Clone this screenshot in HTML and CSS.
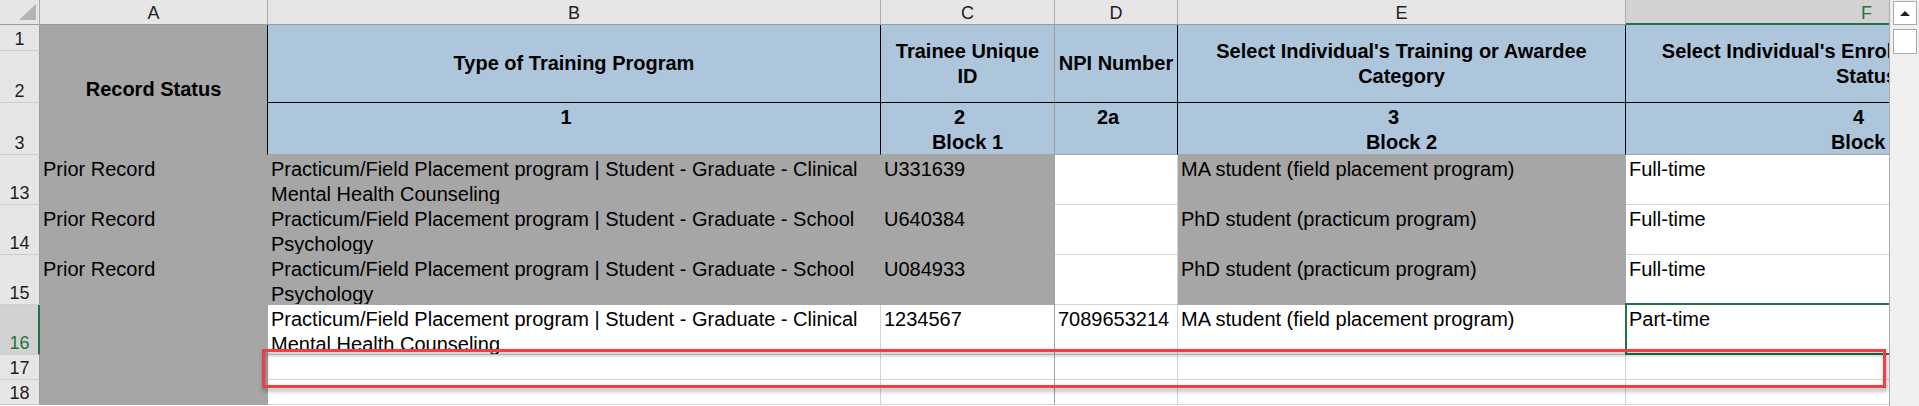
FILE: index.html
```html
<!DOCTYPE html>
<html>
<head>
<meta charset="utf-8">
<link rel="stylesheet" href="styles.css">
</head>
<body>
<div class="window">
  <div class="sheet">
    <div class="grid">
      <div class="corner"><svg width="39" height="24" viewBox="0 0 39 24"><polygon points="19,20 36,20 36,4" fill="#b4b4b4"/></svg></div>
      <div class="hd">A</div>
      <div class="hd">B</div>
      <div class="hd">C</div>
      <div class="hd">D</div>
      <div class="hd">E</div>
      <div class="hd sel">F</div>

      <div class="rh">1</div>
      <div class="ah">Record Status</div>
      <div class="th">Type of Training Program</div>
      <div class="th cd">Trainee Unique<br>ID</div>
      <div class="th">NPI Number</div>
      <div class="th">Select Individual's Training or Awardee Category</div>
      <div class="th">Select Individual's Enrollment/Employment<br>Status</div>

      <div class="rh">2</div>

      <div class="rh">3</div>
      <div class="ts"><span class="n">1</span></div>
      <div class="ts cd"><span class="n">2</span><br>Block 1</div>
      <div class="ts"><span class="n">2a</span></div>
      <div class="ts"><span class="n">3</span><br>Block 2</div>
      <div class="ts"><span class="n">4</span><br>Block 3</div>

      <div class="rh">13</div>
      <div class="c g">Prior Record</div>
      <div class="c g">Practicum/Field Placement program | Student - Graduate - Clinical Mental Health Counseling</div>
      <div class="c g cd">U331639</div>
      <div class="c w"></div>
      <div class="c g">MA student (field placement program)</div>
      <div class="c w">Full-time</div>

      <div class="rh">14</div>
      <div class="c g">Prior Record</div>
      <div class="c g">Practicum/Field Placement program | Student - Graduate - School Psychology</div>
      <div class="c g cd">U640384</div>
      <div class="c w"></div>
      <div class="c g">PhD student (practicum program)</div>
      <div class="c w">Full-time</div>

      <div class="rh">15</div>
      <div class="c g">Prior Record</div>
      <div class="c g">Practicum/Field Placement program | Student - Graduate - School Psychology</div>
      <div class="c g cd">U084933</div>
      <div class="c w"></div>
      <div class="c g">PhD student (practicum program)</div>
      <div class="c w">Full-time</div>

      <div class="rh sel">16</div>
      <div class="c g"></div>
      <div class="c w">Practicum/Field Placement program | Student - Graduate - Clinical Mental Health Counseling</div>
      <div class="c w cd">1234567</div>
      <div class="c w">7089653214</div>
      <div class="c w">MA student (field placement program)</div>
      <div class="c w cur">Part-time<div class="selbox"></div></div>

      <div class="rh">17</div>
      <div class="c g"></div>
      <div class="c w"></div>
      <div class="c w cd"></div>
      <div class="c w"></div>
      <div class="c w"></div>
      <div class="c w"></div>

      <div class="rh">18</div>
      <div class="c g"></div>
      <div class="c w"></div>
      <div class="c w cd"></div>
      <div class="c w"></div>
      <div class="c w"></div>
      <div class="c w"></div>
    </div>
    <div class="annot"></div>
  </div>
  <div class="vscroll">
    <div class="sb-btn"><span class="arrow"></span></div>
    <div class="sb-thumb"></div>
  </div>
</div>
</body>
</html>
```

FILE: styles.css
```css
html, body {
  margin: 0;
  padding: 0;
}
body {
  width: 1919px;
  height: 406px;
  overflow: hidden;
  background: #ffffff;
  font-family: "Liberation Sans", Arial, sans-serif;
  color: #000;
}
.window {
  display: flex;
  height: 406px;
}
.sheet {
  position: relative;
  flex: none;
  width: 1890px;
  height: 406px;
  box-sizing: border-box;
  border-right: 1px solid #ababab;
  overflow: hidden;
}
.grid {
  display: grid;
  width: 2108px;
  grid-template-columns: 40px 228px 613px 174px 123px 448px 482px;
  grid-template-rows: 25px 26px 52px 52px 50px 50px 50px 50px 25px 25px;
}
.grid > div {
  box-sizing: border-box;
  overflow: hidden;
}

/* headers */
.corner {
  background: #e6e6e6;
  border-right: 1px solid #ababab;
  border-bottom: 1px solid #9b9b9b;
}
.corner svg { display: block; }
.hd {
  background: #e6e6e6;
  border-right: 1px solid #ababab;
  border-bottom: 1px solid #9b9b9b;
  text-align: center;
  font-size: 18px;
  line-height: 22px;
  padding-top: 2px;
  color: #1e1e1e;
}
.hd.sel {
  background: #d2d2d2;
  color: #217346;
  border-bottom: 2px solid #217346;
}
.rh {
  background: #e6e6e6;
  border-right: 1px solid #9b9b9b;
  border-bottom: 1px solid #cdcdcd;
  display: flex;
  align-items: flex-end;
  justify-content: center;
  font-size: 18px;
  line-height: 20px;
  padding-bottom: 1px;
  color: #1e1e1e;
}
.rh.sel {
  background: #d2d2d2;
  color: #217346;
  border-right: 2px solid #217346;
  padding-left: 1px;
}

/* title cells */
.ah {
  grid-row: span 3;
  background: #a6a6a6;
  border-right: 1px solid #000;
  border-bottom: 1px solid #a6a6a6;
  display: flex;
  align-items: center;
  justify-content: center;
  font-weight: bold;
  font-size: 20px;
  line-height: 25px;
}
.th {
  grid-row: span 2;
  background: #aec6dc;
  border-right: 1px solid #000;
  border-bottom: 1px solid #000;
  display: flex;
  align-items: center;
  justify-content: center;
  text-align: center;
  font-weight: bold;
  font-size: 20px;
  line-height: 25px;
  padding: 0 2px;
}
.ts {
  background: #aec6dc;
  border-right: 1px solid #000;
  border-bottom: 1px solid #a6a6a6;
  text-align: center;
  font-weight: bold;
  font-size: 20px;
  line-height: 25px;
  padding: 2px 2px 0;
}
.n { padding-right: 16px; }
.th.cd, .ts.cd { border-right-color: #9e9e9e; }

/* data cells */
.c {
  font-size: 20px;
  line-height: 25px;
  padding: 2px 3px 0;
  border-right: 1px solid #d4d4d4;
  border-bottom: 1px solid #d4d4d4;
}
.g {
  background: #a6a6a6;
  border-right-color: #a6a6a6;
  border-bottom-color: #a6a6a6;
}
.w { background: #ffffff; }
.c.cd { border-right-color: #a0a0a0; }
.grid > .cur {
  position: relative;
  overflow: visible;
}
.selbox {
  position: absolute;
  top: -2px;
  left: -1px;
  right: -2px;
  bottom: -1px;
  border: 2px solid #217346;
}

/* annotation */
.annot {
  position: absolute;
  left: 262px;
  top: 349px;
  width: 1624px;
  height: 39px;
  box-sizing: border-box;
  border: 3px solid #ee4042;
  filter: drop-shadow(1px 3px 2px rgba(0, 0, 0, 0.35));
}

/* scrollbar */
.vscroll {
  flex: none;
  width: 29px;
  height: 406px;
  background: #f0f0f0;
  box-sizing: border-box;
  padding: 1px 0 0 3px;
  display: flex;
  flex-direction: column;
  gap: 4px;
}
.sb-btn {
  width: 24px;
  height: 24px;
  box-sizing: border-box;
  border: 1px solid #ababab;
  background: #fff;
  display: flex;
  align-items: center;
  justify-content: center;
}
.arrow {
  width: 0;
  height: 0;
  border-left: 5px solid transparent;
  border-right: 5px solid transparent;
  border-bottom: 5px solid #1f1f1f;
}
.sb-thumb {
  width: 24px;
  height: 25px;
  box-sizing: border-box;
  border: 1px solid #ababab;
  background: #fff;
}
```
